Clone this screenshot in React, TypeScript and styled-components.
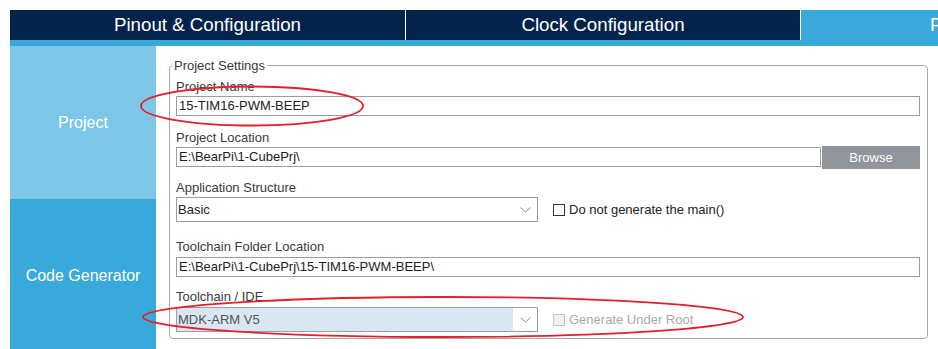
import React from "react";
import styled, { createGlobalStyle } from "styled-components";

const GlobalStyle = createGlobalStyle`
    html, body {
        margin: 0;
        padding: 0;
        background: #ffffff;
        font-family: "Liberation Sans", Arial, sans-serif;
        overflow: hidden;
    }
`;

const Page = styled.div`
    position: relative;
    width: 938px;
    height: 349px;
    padding: 10px 0 0 10px;
    box-sizing: border-box;
    overflow: hidden;
    display: flex;
    flex-direction: column;
`;

const TabBar = styled.div`
    display: flex;
    height: 30px;
    flex: 0 0 30px;
    background: #03234b;
`;

const Tab = styled.div<{ $active?: boolean; $w: number }>`
    flex: 0 0 ${(p) => p.$w}px;
    box-sizing: border-box;
    display: flex;
    align-items: center;
    justify-content: center;
    font-size: 18.7px;
    color: #ffffff;
    white-space: nowrap;
    background: ${(p) => (p.$active ? "#39a9db" : "#03234b")};
    border-right: ${(p) => (p.$active ? "none" : "1px solid #ffffff")};
`;

const Stripe = styled.div`
    height: 6px;
    flex: 0 0 6px;
    background: #39a9db;
`;

const Body = styled.div`
    display: flex;
    flex: 1;
    min-height: 0;
`;

const Sidebar = styled.div`
    width: 146px;
    flex: 0 0 146px;
    display: flex;
    flex-direction: column;
`;

const SideItem = styled.div<{ $light?: boolean }>`
    height: 153px;
    flex: 0 0 153px;
    display: flex;
    align-items: center;
    justify-content: center;
    font-size: 16px;
    color: #ffffff;
    background: ${(p) => (p.$light ? "#7dc6e8" : "#39a9db")};
`;

const Content = styled.div`
    flex: 1;
    padding: 12px 10px 0 13px;
`;

const Fieldset = styled.fieldset`
    margin: 0;
    padding: 6px 7px 6px 6px;
    border: 1px solid #a3a7ab;
    border-radius: 4px;
    display: flex;
    flex-direction: column;
`;

const Legend = styled.legend`
    margin-left: -4px;
    padding: 0 2px;
    font-size: 13px;
    line-height: 15px;
    color: #3a3a3a;
`;

const Group = styled.div<{ $mt?: number }>`
    display: flex;
    flex-direction: column;
    margin-top: ${(p) => p.$mt || 0}px;
`;

const Label = styled.div<{ $gap?: number }>`
    font-size: 13px;
    line-height: 15px;
    color: #3a3a3a;
    margin-bottom: ${(p) => p.$gap ?? 2}px;
`;

const TextBox = styled.div`
    height: 20px;
    box-sizing: border-box;
    border: 1px solid #9a9ea2;
    padding: 0 2px;
    font-size: 13px;
    line-height: 18px;
    color: #222222;
    white-space: nowrap;
    overflow: hidden;
    flex: 1;
`;

const Row = styled.div`
    display: flex;
    align-items: flex-start;
`;

const PathBox = styled(TextBox)`
    margin-top: 1px;
`;

const BrowseButton = styled.div`
    width: 98px;
    height: 23px;
    margin-left: 1px;
    background: #8f959b;
    color: #ffffff;
    font-size: 13px;
    display: flex;
    align-items: center;
    justify-content: center;
`;

const SelectRow = styled.div`
    display: flex;
    align-items: center;
`;

const Select = styled.div`
    width: 362px;
    height: 25px;
    box-sizing: border-box;
    border: 1px solid #9a9ea2;
    display: flex;
`;

const SelectValue = styled.div<{ $fill?: boolean }>`
    flex: 1;
    padding-left: 1px;
    font-size: 13px;
    line-height: 23px;
    color: ${(p) => (p.$fill ? "#555555" : "#222222")};
    background: ${(p) => (p.$fill ? "#dae7f3" : "#ffffff")};
`;

const SelectArrow = styled.div`
    width: 23px;
    display: flex;
    align-items: center;
    justify-content: center;
    padding-left: 1px;
`;

const Check = styled.div<{ $disabled?: boolean }>`
    display: flex;
    align-items: center;
    margin-left: 15px;
    font-size: 13px;
    color: ${(p) => (p.$disabled ? "#a9a9a9" : "#222222")};
`;

const CheckBox = styled.span<{ $disabled?: boolean }>`
    display: inline-block;
    width: 12px;
    height: 12px;
    box-sizing: border-box;
    margin-right: 4px;
    border: 1px solid ${(p) => (p.$disabled ? "#c4c4c4" : "#333333")};
    background: ${(p) => (p.$disabled ? "#f1f1f1" : "#ffffff")};
`;

const Marks = styled.svg`
    position: absolute;
    left: 0;
    top: 0;
    pointer-events: none;
`;

const Chevron = () => (
    <svg width="11" height="6" viewBox="0 0 11 6">
        <polyline points="0.5,0.5 5.5,5 10.5,0.5" fill="none" stroke="#8a8a8a" strokeWidth="1" />
    </svg>
);

const App = () => {
    return (
        <Page>
            <GlobalStyle />
            <TabBar>
                <Tab $w={396}>Pinout &amp; Configuration</Tab>
                <Tab $w={395}>Clock Configuration</Tab>
                <Tab $w={395} $active>Project Manager</Tab>
            </TabBar>
            <Stripe />
            <Body>
                <Sidebar>
                    <SideItem $light>Project</SideItem>
                    <SideItem>Code Generator</SideItem>
                </Sidebar>
                <Content>
                    <Fieldset>
                        <Legend>Project Settings</Legend>
                        <Group>
                            <Label>Project Name</Label>
                            <TextBox>15-TIM16-PWM-BEEP</TextBox>
                        </Group>
                        <Group $mt={14}>
                            <Label $gap={1}>Project Location</Label>
                            <Row>
                                <PathBox>E:\BearPi\1-CubePrj\</PathBox>
                                <BrowseButton>Browse</BrowseButton>
                            </Row>
                        </Group>
                        <Group $mt={11}>
                            <Label>Application Structure</Label>
                            <SelectRow>
                                <Select>
                                    <SelectValue>Basic</SelectValue>
                                    <SelectArrow><Chevron /></SelectArrow>
                                </Select>
                                <Check>
                                    <CheckBox />
                                    Do not generate the main()
                                </Check>
                            </SelectRow>
                        </Group>
                        <Group $mt={17}>
                            <Label $gap={3}>Toolchain Folder Location</Label>
                            <TextBox>E:\BearPi\1-CubePrj\15-TIM16-PWM-BEEP\</TextBox>
                        </Group>
                        <Group $mt={12}>
                            <Label $gap={3}>Toolchain / IDE</Label>
                            <SelectRow>
                                <Select>
                                    <SelectValue $fill>MDK-ARM V5</SelectValue>
                                    <SelectArrow><Chevron /></SelectArrow>
                                </Select>
                                <Check $disabled>
                                    <CheckBox $disabled />
                                    Generate Under Root
                                </Check>
                            </SelectRow>
                        </Group>
                    </Fieldset>
                </Content>
            </Body>
            <Marks width="938" height="349" viewBox="0 0 938 349">
                <ellipse cx="252" cy="106" rx="111" ry="19.5" fill="none" stroke="#e3202a" strokeWidth="1.8" />
                <ellipse cx="443" cy="317" rx="300" ry="20" fill="none" stroke="#e3202a" strokeWidth="1.8" />
            </Marks>
        </Page>
    );
};

export default App;
